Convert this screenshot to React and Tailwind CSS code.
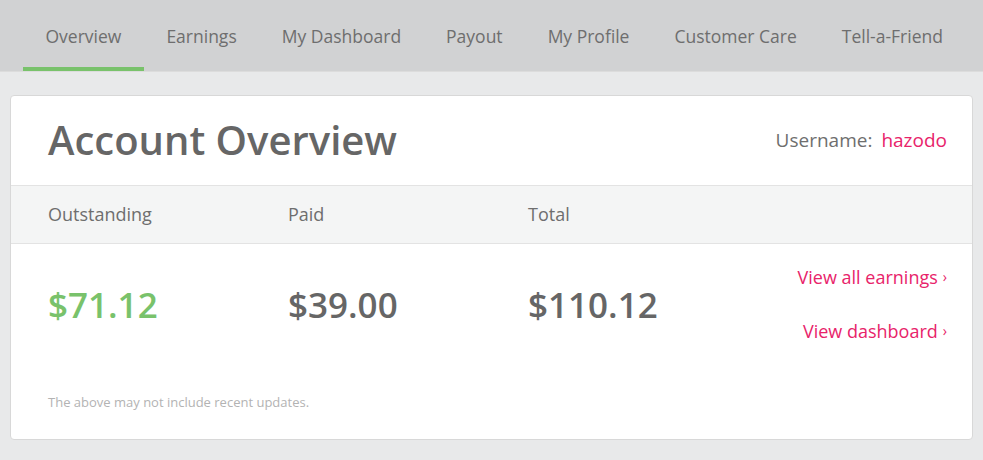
import React from 'react';

const tabs = ['Overview', 'Earnings', 'My Dashboard', 'Payout', 'My Profile', 'Customer Care', 'Tell-a-Friend'];

const totals = [
  { label: 'Outstanding', value: '$71.12', color: 'text-[#79c26b]' },
  { label: 'Paid', value: '$39.00', color: 'text-[#666666]' },
  { label: 'Total', value: '$110.12', color: 'text-[#666666]' },
];

const App = () => {
  return (
    <div className="min-h-[460px] bg-[#e8e9ea] font-['Open_Sans',sans-serif] pb-[20px]">
      {/* Tabs */}
      <nav className="h-[72px] bg-[#d1d2d3] border-b border-[#dcdcdc] flex pl-[23px] overflow-hidden">
        {tabs.map((tab, i) => (
          <div
            key={tab}
            className={`shrink-0 whitespace-nowrap px-[22.5px] flex items-center text-[17.5px] text-[#6e6e6e] border-b-4 ${
              i === 0 ? 'border-[#79c26b]' : 'border-transparent'
            }`}
          >
            <span className="pt-[5px]">{tab}</span>
          </div>
        ))}
      </nav>

      {/* Card */}
      <div className="mx-[10px] mt-[23px] bg-white border border-[#d8d8d8] rounded-[4px]">
        {/* Header */}
        <div className="h-[90px] flex items-center justify-between pl-[37px] pr-[25px] border-b border-[#e3e3e3]">
          <h1 className="text-[40px] font-semibold text-[#666666] leading-none pb-[2px]">Account Overview</h1>
          <div className="text-[19px] text-[#6e6e6e] whitespace-nowrap">
            Username:<span className="ml-[9px] text-[#e8236a]">hazodo</span>
          </div>
        </div>

        {/* Labels */}
        <div className="h-[58px] flex items-center pl-[37px] bg-[#f4f5f5] border-b border-[#e3e3e3] text-[18px] text-[#6e6e6e]">
          {totals.map((t) => (
            <div key={t.label} className="w-[240px]">{t.label}</div>
          ))}
        </div>

        {/* Values */}
        <div className="pl-[37px] pr-[25px] pt-[21px]">
          <div className="flex items-center">
            {totals.map((t) => (
              <div key={t.label} className={`w-[240px] text-[35px] font-semibold leading-none ${t.color}`}>
                {t.value}
              </div>
            ))}
            <div className="flex-1 flex flex-col items-end gap-[30px] text-[18px] leading-[24px] text-[#e8236a]">
              <a className="flex items-center">
                View all earnings<span className="ml-[5px] text-[14px]">›</span>
              </a>
              <a className="flex items-center">
                View dashboard<span className="ml-[5px] text-[14px]">›</span>
              </a>
            </div>
          </div>
          <p className="mt-[50px] pb-[28px] text-[13px] leading-[18px] text-[#b3b3b3]">
            The above may not include recent updates.
          </p>
        </div>
      </div>
    </div>
  );
};

export default App;
